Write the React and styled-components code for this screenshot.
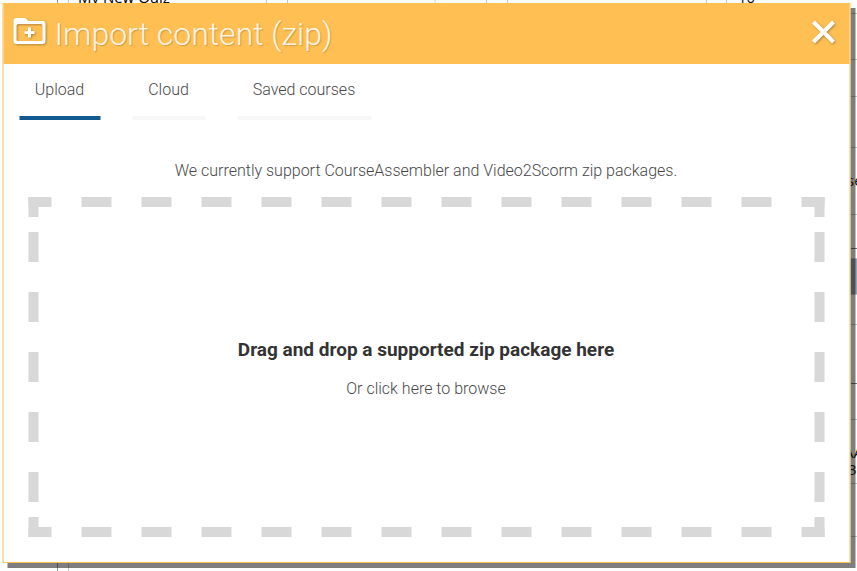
import React from "react";
import styled, { createGlobalStyle } from "styled-components";

const Global = createGlobalStyle`
  * { box-sizing: border-box; }
  body { margin: 0; background: #fff; overflow: hidden; font-family: Roboto, "Liberation Sans", sans-serif; }
`;

const Screen = styled.div`
  position: relative;
  width: 857px;
  height: 571px;
  overflow: hidden;
`;

const Backdrop = styled.div`
  display: grid;
  grid-template-columns: 58px 668px 131px;
  height: 571px;
  background: #fcfdfd;
`;

const Rail = styled.div`
  border-right: 1px solid #8b99a3;
`;

const Cards = styled.div`
  display: grid;
  grid-template-columns: 198px 200px 200px;
  gap: 20px;
  margin-left: 10px;
  border-left: 1px solid #c5c7c8;
  align-items: start;
`;

const Card = styled.div`
  height: 200px;
  border: solid #c5c7c8;
  border-width: 0 1px 0 ${(p) => (p.$first ? 0 : 1)}px;
  padding-left: 9px;
  color: ${(p) => (p.$muted ? "#e2dfdc" : "#000")};
`;

const CardText = styled.div`
  margin-top: ${(p) => p.$shift}px;
  white-space: nowrap;
  font: 500 15px/14px "Open Sans", sans-serif;
`;

const SidePanel = styled.div`
  display: flex;
  flex-direction: column;
`;

const SideRow = styled.div`
  flex: none;
  height: ${(p) => p.$height}px;
  padding: ${(p) => p.$top || 0}px 0 0 ${(p) => p.$left || 0}px;
  border-bottom: 1px solid ${(p) => (p.$strong ? "#747b80" : "#c3c6c8")};
  border-left: ${(p) => (p.$edge ? "1px solid #c5c7c8" : "0")};
  background: ${(p) => p.$fill || "transparent"};
  color: #111;
  font: 15px/17px "Open Sans", sans-serif;
  white-space: pre;
`;

const Dialog = styled.section`
  position: absolute;
  left: 2px;
  top: 3px;
  width: 848px;
  height: 560px;
  transform: translateX(0.5px);
  border: 1px solid #ffbf53;
  background: #fff;
  box-shadow: 5px 5px 0 rgba(0, 0, 0, 0.5);
  color: #484848;
`;

const Header = styled.header`
  display: flex;
  align-items: center;
  height: 60px;
  padding: 0 14px 0 9px;
  background: #ffbf53;
  color: #fff;
`;

const HeaderIcon = styled.svg`
  display: block;
  flex: none;
  overflow: visible;
  margin-top: ${(p) => p.$lift || 0}px;
  filter: drop-shadow(1px 1px 1px rgba(0, 0, 0, 0.3));
`;

const Title = styled.h1`
  flex: 1;
  margin: 0 0 0 8px;
  font-size: 32px;
  line-height: 40px;
  font-weight: 300;
  color: rgba(255, 255, 255, 0.88);
  text-shadow: 1px 1px 1px rgba(0, 0, 0, 0.18);
`;

const Tabs = styled.nav`
  display: flex;
  gap: 32px;
  padding: 0 16px;
`;

const Tab = styled.div`
  width: ${(p) => p.$width}px;
  height: 56px;
  padding: 16px 1px 0 0;
  border-bottom: 4px solid ${(p) => (p.$active ? "#11598e" : "#f7f7f7")};
  text-align: center;
  font-size: 16px;
  line-height: 19px;
  font-weight: 300;
`;

const Hint = styled.p`
  margin: 41px 1px 17px 0;
  text-align: center;
  font-size: 16px;
  line-height: 19px;
  font-weight: 300;
`;

const ink = "#d8d8d8";

const DropZone = styled.div`
  height: 340px;
  margin: 0 25px;
  padding: 2px 1px 0 0;
  display: flex;
  flex-direction: column;
  align-items: center;
  justify-content: center;
  background:
    linear-gradient(${ink}, ${ink}) 0 0 / 10px 20px no-repeat,
    linear-gradient(${ink}, ${ink}) 100% 0 / 10px 20px no-repeat,
    linear-gradient(${ink}, ${ink}) 0 100% / 10px 20px no-repeat,
    linear-gradient(${ink}, ${ink}) 100% 100% / 10px 20px no-repeat,
    linear-gradient(90deg, ${ink} 50%, transparent 50%) 53px 0 / 60px 10px repeat-x,
    linear-gradient(90deg, ${ink} 50%, transparent 50%) 53px 100% / 60px 10px repeat-x,
    linear-gradient(${ink} 50%, transparent 50%) 0 35px / 10px 60px repeat-y,
    linear-gradient(${ink} 50%, transparent 50%) 100% 35px / 10px 60px repeat-y;
`;

const DropTitle = styled.strong`
  color: #333;
  font-size: 19px;
  line-height: 22px;
  font-weight: 700;
  margin-bottom: 18px;
`;

const DropText = styled.span`
  font-size: 16px;
  line-height: 19px;
  font-weight: 300;
`;

export default function App() {
  return (
    <Screen>
      <Global />
      <Backdrop>
        <Rail />
        <Cards>
          <Card $first><CardText $shift={-10}>My New Quiz</CardText></Card>
          <Card $muted><CardText $shift={-13}>Enter a short description</CardText></Card>
          <Card $muted><CardText $shift={-13}>Course code</CardText></Card>
        </Cards>
        <SidePanel>
          <SideRow $height={14} $left={11} $edge><CardText $shift={-10}>10</CardText></SideRow>
          <SideRow $height={46} />
          <SideRow $height={37} />
          <SideRow $height={51} />
          <SideRow $height={67} $top={24} $left={121}>se</SideRow>
          <SideRow $height={34} $strong />
          <SideRow $height={10} />
          <SideRow $height={36} $fill="#93a4b1" />
          <SideRow $height={30} />
          <SideRow $height={59} $strong />
          <SideRow $height={36} />
          <SideRow $height={64} $top={24} $left={118}>{"AA\n 3"}</SideRow>
          <SideRow $height={53} />
        </SidePanel>
      </Backdrop>
      <Dialog role="dialog">
        <Header>
          <HeaderIcon $lift={-6} width="34" height="28" viewBox="0 0 34 28">
            <path fill="#fff" fillRule="evenodd" d="M4 1h8q1 0 2 1l2 2h14q3 0 3 3v17q0 3-3 3H4q-3 0-3-3V4q0-3 3-3ZM5.5 7Q4 7 4 8.5v14Q4 24 5.5 24h23q1.5 0 1.5-1.5v-14Q30 7 28.5 7ZM15.5 10.5h3v3.5H22v3h-3.5v3.5h-3V17H12v-3h3.5Z" />
          </HeaderIcon>
          <Title>Import content (zip)</Title>
          <HeaderIcon $lift={-5} width="24" height="24" viewBox="0 0 24 24">
            <path d="M2 2 22 22M22 2 2 22" stroke="#fff" strokeWidth="4" />
          </HeaderIcon>
        </Header>
        <Tabs>
          <Tab $width={81} $active>Upload</Tab>
          <Tab $width={73}>Cloud</Tab>
          <Tab $width={134}>Saved courses</Tab>
        </Tabs>
        <Hint>We currently support CourseAssembler and Video2Scorm zip packages.</Hint>
        <DropZone>
          <DropTitle>Drag and drop a supported zip package here</DropTitle>
          <DropText>Or click here to browse</DropText>
        </DropZone>
      </Dialog>
    </Screen>
  );
}
